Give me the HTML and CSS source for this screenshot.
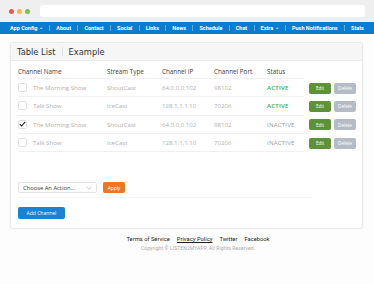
FILE: index.html
```html
<!DOCTYPE html>
<html>
<head>
<meta charset="utf-8">
<link rel="stylesheet" href="styles.css">
</head>
<body>
<div class="chrome">
  <div class="dots"><span class="dot red"></span><span class="dot yellow"></span><span class="dot green"></span></div>
  <div class="address"></div>
</div>
<nav class="nav">
  <span class="nav-item">App Config <span class="caret">⌄</span></span>
  <span class="nav-item">About</span>
  <span class="nav-item">Contact</span>
  <span class="nav-item">Social</span>
  <span class="nav-item">Links</span>
  <span class="nav-item">News</span>
  <span class="nav-item">Schedule</span>
  <span class="nav-item">Chat</span>
  <span class="nav-item">Extra <span class="caret">⌄</span></span>
  <span class="nav-item">Push Notifications</span>
  <span class="nav-item">Stats</span>
</nav>
<main class="main">
  <section class="card">
    <header class="card-head"><span class="title">Table List</span><span class="title-sep"></span><span class="title">Example</span></header>
    <div class="card-body">
      <div class="row head">
        <div class="cell">Channel Name</div>
        <div class="cell">Stream Type</div>
        <div class="cell">Channel IP</div>
        <div class="cell">Channel Port</div>
        <div class="cell">Status</div>
        <div class="cell last"></div>
      </div>
      <div class="row">
        <div class="cell"><span class="check"></span>The Morning Show</div>
        <div class="cell">ShoutCast</div>
        <div class="cell">64.0.0.0.102</div>
        <div class="cell">98102</div>
        <div class="cell active">ACTIVE</div>
        <div class="cell last"><span class="btn edit">Edit</span><span class="btn del">Delete</span></div>
      </div>
      <div class="row">
        <div class="cell"><span class="check"></span>Talk Show</div>
        <div class="cell">IceCast</div>
        <div class="cell">128.1.1.1.10</div>
        <div class="cell">70206</div>
        <div class="cell active">ACTIVE</div>
        <div class="cell last"><span class="btn edit">Edit</span><span class="btn del">Delete</span></div>
      </div>
      <div class="row">
        <div class="cell"><span class="check checked"><svg width="7" height="6" viewBox="0 0 7 6"><path d="M0.8 3.2 L2.6 5 L6.2 0.8" fill="none" stroke="#222" stroke-width="1.1"/></svg></span>The Morning Show</div>
        <div class="cell">ShoutCast</div>
        <div class="cell">64.0.0.0.102</div>
        <div class="cell">98102</div>
        <div class="cell inactive">INACTIVE</div>
        <div class="cell last"><span class="btn edit">Edit</span><span class="btn del">Delete</span></div>
      </div>
      <div class="row">
        <div class="cell"><span class="check"></span>Talk Show</div>
        <div class="cell">IceCast</div>
        <div class="cell">128.1.1.1.10</div>
        <div class="cell">70206</div>
        <div class="cell inactive">INACTIVE</div>
        <div class="cell last"><span class="btn edit">Edit</span><span class="btn del">Delete</span></div>
      </div>
      <div class="actions">
        <div class="select"><span>Choose An Action...</span><svg width="6" height="4" viewBox="0 0 6 4"><path d="M0.5 0.8 L3 3.2 L5.5 0.8" fill="none" stroke="#bbb" stroke-width="0.8"/></svg></div>
        <span class="btn apply">Apply</span>
      </div>
      <div class="rule"></div>
      <span class="btn add">Add Channel</span>
    </div>
  </section>
</main>
<footer class="footer">
  <div class="links"><span>Terms of Service</span><span class="u">Privacy Policy</span><span>Twitter</span><span>Facebook</span></div>
  <div class="copy">Copyright © LISTEN2MYAPP. All Rights Reserved.</div>
</footer>
</body>
</html>
```

FILE: styles.css
```css
* { box-sizing: border-box; }
body {
  margin: 0;
  background: #fdfdfd;
  font-family: "Open Sans", "Liberation Sans", sans-serif;
  color: #333;
  width: 374px;
  height: 284px;
  overflow: hidden;
}
.chrome {
  height: 22px;
  background: #efefef;
  display: flex;
  align-items: center;
  padding: 0 9px 0 9px;
}
.dots { display: flex; gap: 3px; width: 31px; }
.dot { width: 5px; height: 5px; border-radius: 50%; display: block; }
.red { background: #df5a54; }
.yellow { background: #efbd3b; }
.green { background: #81bf4f; }
.address {
  flex: 1;
  height: 12px;
  background: #fff;
  border-radius: 3px;
}
.nav {
  height: 12px;
  background: #0b7dd0;
  display: flex;
  align-items: center;
  justify-content: space-between;
  padding: 0 10px 0 4px;
  font-family: Roboto, "Liberation Sans", sans-serif;
  font-weight: 700;
  font-size: 5.5px;
  color: #fff;
}
.nav-item {
  padding: 0 0 0 6px;
  border-left: 1px solid rgba(255,255,255,0.35);
  line-height: 6px;
  white-space: nowrap;
}
.nav-item:first-child { border-left: none; padding-left: 6px; }
.caret { font-size: 5px; opacity: 0.85; position: relative; top: -1px; }
.main { padding: 8px 11px 0 10px; }
.card {
  background: #fff;
  border: 1px solid #e8e8e8;
  border-radius: 3px;
  box-shadow: 0 0 3px rgba(0,0,0,0.05);
  height: 187px;
}
.card-head {
  height: 18px;
  background: #f6f6f6;
  border-bottom: 1px solid #eaeaea;
  display: flex;
  align-items: center;
  padding-left: 6px;
  font-family: "DejaVu Sans", sans-serif;
  font-size: 8.3px;
  color: #333;
}
.title-sep { width: 1px; height: 9px; background: #ddd; margin: 0 6px; }
.card-body { padding: 3px 7px 0 7px; }
.row {
  display: grid;
  grid-template-columns: 89px 55px 52px 53px 37px 1fr;
  height: 18.3px;
  font-size: 6.1px;
  color: #b0b0b0;
}
.row.head { height: 15px; color: #444; font-size: 6.3px; }
.cell {
  display: flex;
  align-items: center;
  border-bottom: 1px solid #efefef;
  white-space: nowrap;
}
.cell.last { border-bottom: none; padding-left: 5px; gap: 3px; }
.active { color: #45a84d; font-weight: 600; letter-spacing: 0.2px; }
.inactive { color: #9a9a9a; letter-spacing: 0.2px; }
.check {
  width: 9px; height: 9px;
  border: 1px solid #e2e2e2;
  border-radius: 2px;
  margin-right: 6px;
  display: inline-flex;
  align-items: center;
  justify-content: center;
}
.btn {
  display: inline-flex;
  align-items: center;
  justify-content: center;
  color: #fff;
  border-radius: 2px;
  font-size: 4.6px;
  height: 11px;
}
.edit { background: #5d9236; width: 22px; }
.del { background: #b5bcc7; width: 22px; }
.actions { display: flex; align-items: center; margin-top: 30px; gap: 6px; }
.select {
  width: 79px; height: 11px;
  border: 1px solid #e4e4e4;
  border-radius: 2px;
  display: flex; align-items: center; justify-content: space-between;
  padding: 0 4px 0 4px;
  font-size: 5.8px;
  color: #333;
  background: #fff;
}
.apply { background: #ee7522; width: 22px; font-size: 4.8px; }
.rule { height: 1px; background: #f4f4f4; width: 294px; margin-top: 4px; }
.add { background: #1a82d2; width: 47px; height: 12px; margin-top: 2px; font-size: 5px; }
.footer {
  font-family: Roboto, "Liberation Sans", sans-serif;
  text-align: center;
  padding-top: 7px;
}
.links { display: flex; justify-content: center; gap: 7px; font-size: 5.8px; color: #222; padding-left: 22px; }
.u { text-decoration: underline; }
.copy { font-size: 5px; color: #aaa; margin-top: 3px; padding-left: 22px; letter-spacing: 0.1px; }
```
